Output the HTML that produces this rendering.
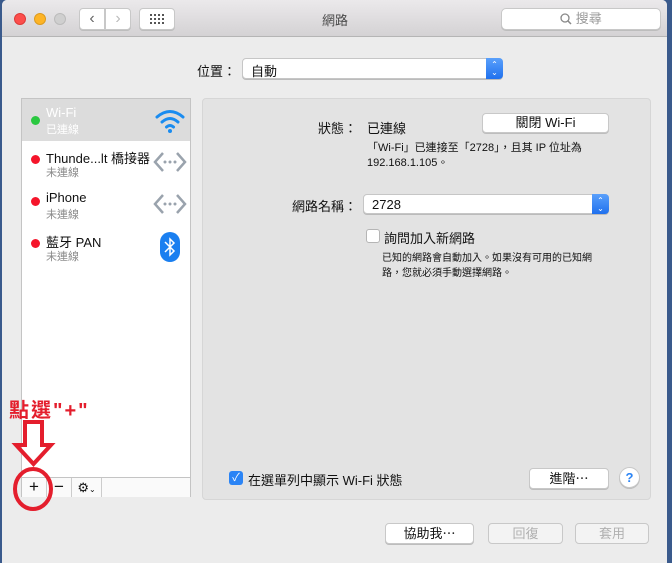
<!DOCTYPE html><html><head><meta charset="utf-8"><style>
*{margin:0;padding:0;box-sizing:border-box}
body{width:672px;height:563px;overflow:hidden;background:#3a5a8c;font-family:"Liberation Sans","Noto Sans CJK TC",sans-serif;font-size:13px;color:#111;position:relative}
.a{position:absolute}
.win{left:2px;top:0;width:665px;height:563px;background:#ececec;border-radius:5px 5px 0 0;overflow:hidden}
.tb{left:0;top:0;width:665px;height:37px;background:linear-gradient(#ebe9eb,#d4d2d4);border-bottom:1px solid #b5b5b5}
.btn{background:#fff;border:1px solid #c8c8c8;border-radius:4px;box-shadow:0 1px 0 #bdbdbd;text-align:center;font-size:13px}
.lt{width:12px;height:12px;border-radius:50%;top:13px}
.sm{font-size:11px}
.gray{color:#8a8a8a}
.dot{width:9px;height:9px;border-radius:50%;left:9px}
.pop{background:#fff;border:1px solid #c6c6c6;border-radius:4px;box-shadow:0 1px 0 #bbb}
.step{right:-1px;top:-1px;width:17px;background:linear-gradient(#5aa0fb,#2071ee);border-radius:0 4px 4px 0;color:#fff;font-size:8px;line-height:8px;text-align:center;padding-top:3px}
.red{color:#e41e2d}
</style></head><body>
<div class="a win">
 <div class="a tb"></div>
 <div class="a lt" style="left:12px;background:#fc4e4c;border:1px solid #dd3a38"></div>
 <div class="a lt" style="left:32px;background:#fdb426;border:1px solid #dc9b1f"></div>
 <div class="a lt" style="left:52px;background:#cfcfcf;border:1px solid #bbb"></div>
 <div class="a btn" style="left:77px;top:8px;width:26px;height:22px;border-radius:4px 0 0 4px;color:#666;font-size:16px;line-height:20px">&#x2039;</div>
 <div class="a btn" style="left:103px;top:8px;width:26px;height:22px;border-radius:0 4px 4px 0;color:#bbb;font-size:16px;line-height:20px">&#x203A;</div>
 <div class="a btn" style="left:137px;top:8px;width:36px;height:22px">
  <svg width="14" height="10" style="margin-top:5px" fill="#555"><g><rect x="0" y="0" width="2" height="2"/><rect x="4" y="0" width="2" height="2"/><rect x="8" y="0" width="2" height="2"/><rect x="12" y="0" width="2" height="2"/><rect x="0" y="4" width="2" height="2"/><rect x="4" y="4" width="2" height="2"/><rect x="8" y="4" width="2" height="2"/><rect x="12" y="4" width="2" height="2"/><rect x="0" y="8" width="2" height="2"/><rect x="4" y="8" width="2" height="2"/><rect x="8" y="8" width="2" height="2"/><rect x="12" y="8" width="2" height="2"/></g></svg></div>
 <div class="a" style="left:320px;top:10px;color:#4a4a4a">網路</div>
 <div class="a btn" style="left:499px;top:8px;width:160px;height:22px;color:#999;line-height:20px;border-radius:5px"><svg width="12" height="12" style="vertical-align:-2px"><circle cx="5" cy="5" r="4" fill="none" stroke="#888" stroke-width="1.3"/><line x1="8" y1="8" x2="11" y2="11" stroke="#888" stroke-width="1.5"/></svg> 搜尋</div>

 <div class="a" style="left:195px;top:61px">位置：</div>
 <div class="a pop" style="left:240px;top:58px;width:261px;height:21px"><span style="position:absolute;left:8px;top:2px">自動</span><div class="a step" style="height:21px">&#x2303;<br>&#x2304;</div></div>

 <!-- left list -->
 <div class="a" style="left:19px;top:98px;width:170px;height:399px;background:#fff;border:1px solid #c4c4c4">
  <div class="a" style="left:0;top:0;width:168px;height:42px;background:#dcdcdc"></div>
  <div class="a dot" style="top:17px;background:#2ac840"></div>
  <div class="a" style="left:24px;top:6px;color:#fff">Wi-Fi</div>
  <div class="a sm" style="left:24px;top:22px;color:#fff">已連線</div>
  <svg class="a" style="left:132px;top:9px" width="32" height="26"><g fill="none" stroke="#1a8cf0" stroke-width="3" stroke-linecap="round"><path d="M3 9 Q16 -2 29 9"/><path d="M8 14 Q16 7 24 14"/><path d="M12.5 19 Q16 16 19.5 19"/></g><circle cx="16" cy="23" r="2" fill="#1a8cf0"/></svg>
  <div class="a dot" style="top:56px;background:#f5152b"></div>
  <div class="a" style="left:24px;top:49px">Thunde...lt 橋接器</div>
  <div class="a sm gray" style="left:24px;top:65px">未連線</div>
  <svg class="a" style="left:131px;top:52px" width="34" height="22"><g fill="none" stroke="#9aa3ad" stroke-width="2.5"><path d="M10 2 L2 11 L10 20"/><path d="M24 2 L32 11 L24 20"/></g><g fill="#9aa3ad"><circle cx="12" cy="11" r="1.5"/><circle cx="17" cy="11" r="1.5"/><circle cx="22" cy="11" r="1.5"/></g></svg>
  <div class="a dot" style="top:98px;background:#f5152b"></div>
  <div class="a" style="left:24px;top:91px">iPhone</div>
  <div class="a sm gray" style="left:24px;top:107px">未連線</div>
  <svg class="a" style="left:131px;top:94px" width="34" height="22"><g fill="none" stroke="#9aa3ad" stroke-width="2.5"><path d="M10 2 L2 11 L10 20"/><path d="M24 2 L32 11 L24 20"/></g><g fill="#9aa3ad"><circle cx="12" cy="11" r="1.5"/><circle cx="17" cy="11" r="1.5"/><circle cx="22" cy="11" r="1.5"/></g></svg>
  <div class="a dot" style="top:140px;background:#f5152b"></div>
  <div class="a" style="left:24px;top:133px">藍牙 PAN</div>
  <div class="a sm gray" style="left:24px;top:149px">未連線</div>
  <svg class="a" style="left:137px;top:133px" width="22" height="30"><rect x="1" y="0" width="20" height="30" rx="10" fill="#1a7ff0"/><path d="M6 10 L15 19 L11 23 L11 7 L15 11 L6 20" fill="none" stroke="#fff" stroke-width="1.5"/></svg>
  <div class="a" style="left:0;top:378px;width:168px;height:20px;border-top:1px solid #c4c4c4;background:#fafafa">
   <div class="a" style="left:0;top:0;width:25px;height:19px;border-right:1px solid #ccc;text-align:center;font-size:17px;line-height:18px">+</div>
   <div class="a" style="left:25px;top:0;width:25px;height:19px;border-right:1px solid #ccc;text-align:center;font-size:17px;line-height:18px">−</div>
   <div class="a" style="left:50px;top:0;width:30px;height:19px;border-right:1px solid #ccc;text-align:center;font-size:13px;line-height:19px">&#x2699;&#xFE0E;<span style="font-size:8px">&#x2304;</span></div>
  </div>
 </div>

 <!-- right panel -->
 <div class="a" style="left:200px;top:98px;width:449px;height:402px;background:#e3e3e3;border:1px solid #d6d6d6;border-radius:4px"></div>
 <div class="a" style="left:316px;top:118px">狀態：</div>
 <div class="a" style="left:365px;top:118px">已連線</div>
 <div class="a btn" style="left:480px;top:113px;width:127px;height:20px;line-height:18px">關閉 Wi-Fi</div>
 <div class="a sm" style="left:365px;top:139px">「Wi-Fi」已連接至「2728」，且其 IP 位址為</div>
 <div class="a sm" style="left:365px;top:154px">192.168.1.105。</div>
 <div class="a" style="left:290px;top:196px">網路名稱：</div>
 <div class="a pop" style="left:361px;top:194px;width:246px;height:20px"><span style="position:absolute;left:8px;top:2px">2728</span><div class="a step" style="height:20px">&#x2303;<br>&#x2304;</div></div>
 <div class="a" style="left:364px;top:229px;width:14px;height:14px;background:#fff;border:1px solid #b5b5b5;border-radius:3px"></div>
 <div class="a" style="left:382px;top:228px">詢問加入新網路</div>
 <div class="a" style="left:380px;top:251px;font-size:10px;line-height:15px">已知的網路會自動加入。如果沒有可用的已知網<br>路，您就必須手動選擇網路。</div>

 <div class="a" style="left:227px;top:471px;width:14px;height:14px;background:#2b84f5;border-radius:3px;color:#fff;font-size:11px;line-height:14px;text-align:center">✓</div>
 <div class="a" style="left:246px;top:470px">在選單列中顯示 Wi-Fi 狀態</div>
 <div class="a btn" style="left:527px;top:468px;width:80px;height:21px;line-height:19px">進階⋯</div>
 <div class="a btn" style="left:617px;top:467px;width:21px;height:21px;border-radius:50%;color:#2b84f5;line-height:19px;font-weight:bold">?</div>

 <div class="a btn" style="left:383px;top:523px;width:89px;height:21px;line-height:19px">協助我⋯</div>
 <div class="a btn" style="left:486px;top:523px;width:75px;height:21px;line-height:19px;color:#b0b0b0;background:#f3f3f3;box-shadow:none">回復</div>
 <div class="a btn" style="left:573px;top:523px;width:74px;height:21px;line-height:19px;color:#b0b0b0;background:#f3f3f3;box-shadow:none">套用</div>
</div>

<!-- annotation -->
<div class="a red" style="left:9px;top:394px;font-size:20px;font-weight:bold;letter-spacing:2px">點選"+"</div>
<svg class="a" style="left:10px;top:418px" width="60" height="100"><path d="M15 4 H32 V27 H41 L23.5 46 L6 27 H15 Z" fill="none" stroke="#e41e2d" stroke-width="4"/><ellipse cx="23" cy="71" rx="18" ry="20" fill="none" stroke="#e41e2d" stroke-width="4"/></svg>
</body></html>
